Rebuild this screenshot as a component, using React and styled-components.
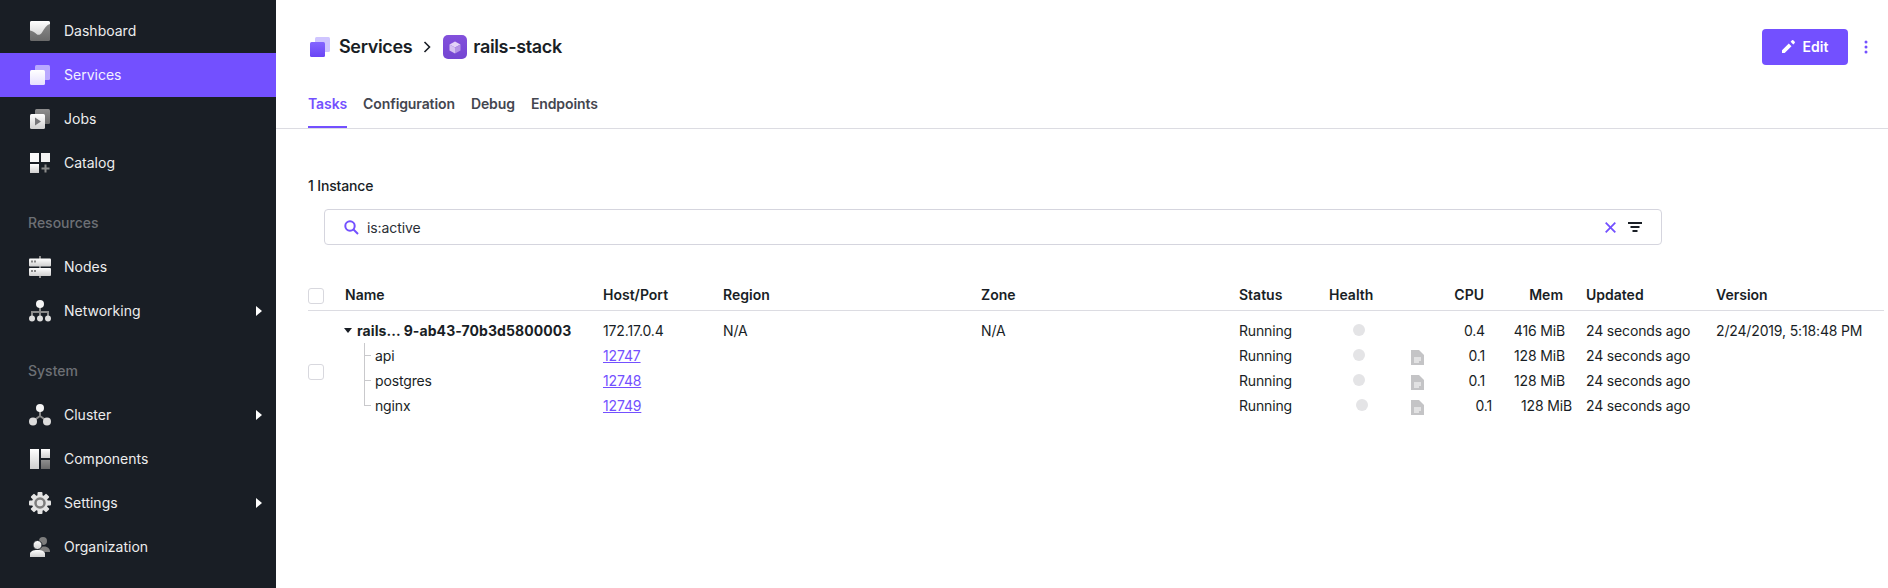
import React from "react";
import styled, { createGlobalStyle } from "styled-components";

const GlobalStyle = createGlobalStyle`
  html, body {
    margin: 0;
    padding: 0;
    height: 100%;
    background: #fff;
    overflow: hidden;
  }
  #root {
    height: 100%;
  }
  * {
    box-sizing: border-box;
  }
  body {
    font-family: Inter, "Liberation Sans", sans-serif;
    font-size: 14px;
    color: #191e25;
  }
`;

const Page = styled.div`
  display: grid;
  grid-template-columns: 276px 1fr;
  height: 588px;
`;

/* sidebar */
const Sidebar = styled.nav`
  background: #191e25;
  padding-top: 9px;
`;

const NavItem = styled.div`
  display: flex;
  align-items: center;
  height: 44px;
  padding: 0 14px 0 29px;
  color: #fff;
  background: ${(p) => (p.$active ? "#7350ff" : "transparent")};
  font-size: 14px;
  line-height: 17px;
  svg.nav-icon {
    width: 22px;
    height: 22px;
    margin-right: 13px;
    flex: none;
  }
`;

const NavLabel = styled.span`
  flex: 1;
  padding-bottom: 2px;
  opacity: 0.92;
`;

const NavCaret = styled.span`
  width: 0;
  height: 0;
  border-top: 5px solid transparent;
  border-bottom: 5px solid transparent;
  border-left: 6px solid #fff;
`;

const NavHeading = styled.div`
  display: flex;
  align-items: center;
  height: 44px;
  margin-top: 16px;
  padding: 0 0 1px 28px;
  color: #6d7075;
  font-size: 14px;
  font-weight: 500;
`;

/* header */
const Main = styled.main`
  min-width: 0;
`;

const TopBar = styled.header`
  display: flex;
  align-items: center;
  justify-content: space-between;
  height: 76px;
  padding: 17px 20px 0 33px;
`;

const Crumbs = styled.div`
  display: flex;
  align-items: center;
  font-size: 18px;
  line-height: 24px;
  font-weight: 600;
  letter-spacing: -0.35px;
`;

const CrumbSep = styled.svg`
  width: 8px;
  height: 12px;
  margin: 0 12px 0 11px;
`;

const Actions = styled.div`
  display: flex;
  align-items: center;
  gap: 16px;
`;

const EditButton = styled.button`
  display: flex;
  align-items: center;
  justify-content: center;
  gap: 8px;
  width: 86px;
  height: 36px;
  border: 0;
  border-radius: 4px;
  background: #7350ff;
  color: #fff;
  font-family: inherit;
  font-size: 14px;
  font-weight: 600;
`;

const Tabs = styled.div`
  display: flex;
  gap: 16px;
  height: 53px;
  padding-left: 32px;
  border-bottom: 1px solid #dcdce2;
`;

const Tab = styled.div`
  height: 52px;
  padding-top: 19px;
  line-height: 17px;
  font-weight: 600;
  letter-spacing: -0.1px;
  color: ${(p) => (p.$active ? "#7350ff" : "#44464f")};
  border-bottom: 2px solid ${(p) => (p.$active ? "#7350ff" : "transparent")};
`;

/* content */
const Content = styled.section`
  padding: 48px 4px 0 32px;
`;

const InstanceCount = styled.div`
  line-height: 17px;
  font-weight: 500;
  letter-spacing: -0.15px;
`;

const SearchBox = styled.div`
  display: flex;
  align-items: center;
  width: 1338px;
  height: 36px;
  margin: 15px 0 0 16px;
  padding: 0 19px 0 19px;
  border: 1px solid #d5d5de;
  border-radius: 4px;
`;

const SearchText = styled.span`
  flex: 1;
  margin-left: 8px;
  color: #2b2f36;
  letter-spacing: -0.1px;
`;

const HeadRow = styled.div`
  display: grid;
  grid-template-columns: 37px 258px 120px 258px 258px 90px 71px 30px 62px 80px 144px 1fr;
  align-items: center;
  height: 33px;
  margin-top: 33px;
  border-bottom: 1px solid #dcdce2;
  font-size: 14px;
  font-weight: 600;
`;

const CheckBox = styled.span`
  display: block;
  width: 16px;
  height: 16px;
  margin-top: ${(p) => (p.$head ? "4px" : "0")};
  border: 1px solid #d8d8de;
  border-radius: 3px;
  background: #fff;
`;

const TableBody = styled.div`
  display: grid;
  grid-template-columns: 37px 1fr;
  padding-top: 7px;
`;

const BodyCheck = styled.div`
  display: flex;
  align-items: center;
  padding-top: 8px;
`;

const Row = styled.div`
  display: grid;
  grid-template-columns: 258px 120px 258px 258px 90px 71px 30px 62px 80px 144px 1fr;
  align-items: center;
  height: 25px;
  line-height: 17px;
  letter-spacing: -0.15px;
`;

const Cell = styled.div`
  white-space: nowrap;
`;

const NumCell = styled.div`
  text-align: right;
  white-space: nowrap;
  padding-right: ${(p) => p.$pad}px;
`;

const UpdatedCell = styled.div`
  padding-left: 14px;
  white-space: nowrap;
`;

const TaskName = styled.div`
  display: flex;
  align-items: center;
  font-weight: 700;
  letter-spacing: 0.08px;
  white-space: nowrap;
`;

const TaskCaret = styled.span`
  width: 0;
  height: 0;
  margin: 0 5px 0 -1px;
  border-left: 4px solid transparent;
  border-right: 4px solid transparent;
  border-top: 5px solid #191e25;
`;

const ChildName = styled.div`
  position: relative;
  height: 25px;
  line-height: 25px;
  padding-left: 30px;
  &::before {
    content: "";
    position: absolute;
    left: 19px;
    top: 0;
    width: 1px;
    height: ${(p) => (p.$last ? "13px" : "25px")};
    background: #c9c9cc;
  }
  &::after {
    content: "";
    position: absolute;
    left: 20px;
    top: 12px;
    width: 6px;
    height: 1px;
    background: #c9c9cc;
  }
`;

const PortLink = styled.a`
  color: #7350ff;
  text-decoration: underline;
`;

const HealthDot = styled.span`
  display: block;
  width: 12px;
  height: 12px;
  margin: -2px 0 0 ${(p) => p.$indent}px;
  border-radius: 50%;
  background: #e4e4e6;
`;

const LogIcon = styled.svg`
  display: block;
  width: 13px;
  height: 15px;
  margin: 4px 0 0 11px;
`;

/* drawings */
const Gradients = () => (
  <svg width="0" height="0" style={{ position: "absolute" }}>
    <defs>
      <linearGradient id="lite" x1="0" y1="0" x2="0" y2="1">
        <stop offset="0" stopColor="#ffffff" />
        <stop offset="1" stopColor="#cfcfcf" />
      </linearGradient>
      <linearGradient id="dim" x1="0" y1="0" x2="0" y2="1">
        <stop offset="0" stopColor="#8e8e8e" />
        <stop offset="1" stopColor="#6a6a6a" />
      </linearGradient>
      <linearGradient id="svcFront" x1="0" y1="0" x2="0" y2="1">
        <stop offset="0" stopColor="#ffffff" />
        <stop offset="1" stopColor="#e6e0ff" />
      </linearGradient>
      <linearGradient id="crumbFront" x1="0" y1="0" x2="0" y2="1">
        <stop offset="0" stopColor="#8465ff" />
        <stop offset="1" stopColor="#6a45f5" />
      </linearGradient>
      <linearGradient id="stackBg" x1="0" y1="0" x2="0" y2="1">
        <stop offset="0" stopColor="#8350dc" />
        <stop offset="1" stopColor="#7445d2" />
      </linearGradient>
      <linearGradient id="wave" x1="0" y1="0" x2="0" y2="1">
        <stop offset="0" stopColor="#ffffff" />
        <stop offset="1" stopColor="#d8d8d8" />
      </linearGradient>
    </defs>
  </svg>
);

const IconDashboard = () => (
  <svg className="nav-icon" viewBox="0 0 22 22">
    <rect x="1" y="1" width="20" height="20" rx="1.5" fill="url(#dim)" />
    <path d="M2.5 1H19.5A1.5 1.5 0 0 1 21 2.5V4C17.5 5 15.5 8 13 12.500C11.500 15 9 15.500 7.500 14C5.500 12 3.500 11 1 10.500V2.500A1.500 1.500 0 0 1 2.500 1Z" fill="url(#wave)" />
  </svg>
);

const IconServices = () => (
  <svg className="nav-icon" viewBox="0 0 22 22">
    <rect x="6" y="1" width="15" height="15" rx="1.5" fill="#fff" opacity="0.5" />
    <rect x="1" y="6" width="15" height="15" rx="1.5" fill="url(#svcFront)" />
  </svg>
);

const IconJobs = () => (
  <svg className="nav-icon" viewBox="0 0 22 22">
    <rect x="6" y="1" width="15" height="15" rx="1.5" fill="url(#dim)" />
    <rect x="1" y="6" width="15" height="15" rx="1.5" fill="url(#lite)" />
    <path d="M6 9.5L12 13.5L6 17.5Z" fill="#77777a" />
  </svg>
);

const IconCatalog = () => (
  <svg className="nav-icon" viewBox="0 0 22 22">
    <rect x="1" y="1" width="9" height="9" fill="#fafafa" />
    <rect x="12" y="1" width="9" height="9" fill="#f2f2f2" />
    <rect x="1" y="12" width="9" height="9" fill="url(#lite)" />
    <path d="M15.5 12.5h2v3h3v2h-3v3h-2v-3h-3v-2h3z" fill="#8a8a8a" />
  </svg>
);

const IconNodes = () => (
  <svg className="nav-icon" viewBox="0 0 22 22">
    <rect x="10" y="0" width="2" height="22" fill="#8a8a8a" />
    <rect x="0" y="2.500" width="22" height="8" rx="1" fill="url(#lite)" />
    <rect x="0" y="12" width="22" height="8" rx="1" fill="url(#lite)" />
    <rect x="2" y="4.500" width="2" height="2" fill="#888" />
    <rect x="5" y="4.500" width="2" height="2" fill="#888" />
    <rect x="2" y="14" width="2" height="2" fill="#888" />
    <rect x="5" y="14" width="2" height="2" fill="#888" />
  </svg>
);

const IconNetworking = () => (
  <svg className="nav-icon" viewBox="0 0 22 22">
    <path d="M11 6V17M3 17V12H19V17" stroke="#8a8a8a" strokeWidth="2" fill="none" />
    <circle cx="11" cy="4" r="4" fill="#f5f5f5" />
    <circle cx="3" cy="18.500" r="3" fill="#dcdcdc" />
    <circle cx="11" cy="18.500" r="3" fill="#dcdcdc" />
    <circle cx="19" cy="18.500" r="3" fill="#dcdcdc" />
  </svg>
);

const IconCluster = () => (
  <svg className="nav-icon" viewBox="0 0 22 22">
    <path d="M11 7V12L4 17M11 12L18 17" stroke="#8a8a8a" strokeWidth="2" fill="none" />
    <circle cx="11" cy="4" r="4" fill="#f5f5f5" />
    <circle cx="4" cy="17.500" r="4" fill="#dcdcdc" />
    <circle cx="18" cy="17.500" r="4" fill="#dcdcdc" />
  </svg>
);

const IconComponents = () => (
  <svg className="nav-icon" viewBox="0 0 22 22">
    <rect x="1" y="1" width="9" height="20" fill="url(#lite)" />
    <rect x="12" y="1" width="9" height="9" fill="url(#lite)" />
    <rect x="12" y="12" width="9" height="9" fill="url(#dim)" />
  </svg>
);

const IconSettings = () => (
  <svg className="nav-icon" viewBox="0 0 22 22">
    <g fill="#e4e4e4">
      {[0, 45, 90, 135, 180, 225, 270, 315].map((deg) => (
        <rect key={deg} x="8.500" y="0" width="5" height="5" rx="1" transform={`rotate(${deg} 11 11)`} />
      ))}
    </g>
    <circle cx="11" cy="11" r="8" fill="#e4e4e4" />
    <circle cx="11" cy="11" r="4.500" fill="none" stroke="#7d7d7d" strokeWidth="2.500" />
  </svg>
);

const IconOrganization = () => (
  <svg className="nav-icon" viewBox="0 0 22 22">
    <circle cx="14" cy="5" r="4" fill="#7d7d7d" />
    <path d="M9 16C9 12 12 10.500 15 10.500C18 10.500 21 12 21 16Z" fill="#7d7d7d" />
    <circle cx="8.500" cy="9" r="4.500" fill="url(#lite)" stroke="#191e25" strokeWidth="1" />
    <path d="M1 21V18C1 15.500 4 14 8.500 14C13 14 16 15.500 16 18V21Z" fill="url(#lite)" />
  </svg>
);

const IconCrumbServices = () => (
  <svg width="22" height="22" viewBox="0 0 22 22" style={{ marginRight: 8 }}>
    <rect x="6" y="1" width="15" height="15" rx="1.500" fill="#cfc5ff" />
    <rect x="1" y="6" width="15" height="15" rx="1.500" fill="url(#crumbFront)" />
  </svg>
);

const IconStack = () => (
  <svg width="24" height="24" viewBox="0 0 24 24" style={{ marginRight: 6 }}>
    <rect width="24" height="24" rx="5" fill="url(#stackBg)" />
    <path d="M12 6.500L17.500 9.500L12 12.500L6.500 9.500Z" fill="#e3d3f7" />
    <path d="M6.500 9.500L12 12.500V18.500L6.500 15.500Z" fill="#d6c1f2" />
    <path d="M17.500 9.500L12 12.500V18.500L17.500 15.500Z" fill="#b595e6" />
  </svg>
);

const IconPencil = () => (
  <svg width="13" height="13" viewBox="0 0 13 13">
    <path d="M0 10.300V13H2.700L9.500 6.200L6.800 3.500ZM11.300 4.400L8.600 1.700L10 .3A1 1 0 0 1 11.300 .3L12.700 1.700A1 1 0 0 1 12.700 3Z" fill="#fff" />
  </svg>
);

const IconKebab = () => (
  <svg width="4" height="14" viewBox="0 0 4 14">
    <circle cx="2" cy="2" r="1.500" fill="#7350ff" />
    <circle cx="2" cy="7" r="1.500" fill="#7350ff" />
    <circle cx="2" cy="12" r="1.500" fill="#7350ff" />
  </svg>
);

const IconSearch = () => (
  <svg width="15" height="15" viewBox="0 0 15 15">
    <circle cx="6" cy="6" r="4.700" fill="none" stroke="#7350ff" strokeWidth="2" />
    <path d="M9.500 9.500L14 14" stroke="#7350ff" strokeWidth="2" />
  </svg>
);

const IconClear = () => (
  <svg width="11" height="11" viewBox="0 0 11 11" style={{ marginRight: 12 }}>
    <path d="M.7 .7L10.300 10.300M10.300 .7L.7 10.300" stroke="#7350ff" strokeWidth="1.800" />
  </svg>
);

const IconFilter = () => (
  <svg width="14" height="10" viewBox="0 0 14 10">
    <path d="M0 0H14V2H0ZM2.500 4H11.500V6H2.500ZM4.500 8H9.500V10H4.500Z" fill="#191e25" />
  </svg>
);

const LogFile = () => (
  <LogIcon viewBox="0 0 13 15">
    <path d="M0 0H8L13 5V15H0Z" fill="#c4c4c6" />
    <path d="M3 8H10M3 10H10M3 12H8" stroke="#fff" strokeWidth="1" />
  </LogIcon>
);

const navTop = [
  { label: "Dashboard", Icon: IconDashboard },
  { label: "Services", Icon: IconServices, active: true },
  { label: "Jobs", Icon: IconJobs },
  { label: "Catalog", Icon: IconCatalog },
];
const navResources = [
  { label: "Nodes", Icon: IconNodes },
  { label: "Networking", Icon: IconNetworking, caret: true },
];
const navSystem = [
  { label: "Cluster", Icon: IconCluster, caret: true },
  { label: "Components", Icon: IconComponents },
  { label: "Settings", Icon: IconSettings, caret: true },
  { label: "Organization", Icon: IconOrganization },
];

const containers = [
  { name: "api", port: "12747", cpu: "0.1", mem: "128 MiB" },
  { name: "postgres", port: "12748", cpu: "0.1", mem: "128 MiB" },
  { name: "nginx", port: "12749", cpu: "0.1", mem: "128 MiB", last: true },
];

function NavList({ items }) {
  return items.map(({ label, Icon, active, caret }) => (
    <NavItem key={label} $active={active}>
      <Icon />
      <NavLabel>{label}</NavLabel>
      {caret && <NavCaret />}
    </NavItem>
  ));
}

export default function App() {
  return (
    <Page>
      <GlobalStyle />
      <Gradients />
      <Sidebar>
        <NavList items={navTop} />
        <NavHeading>Resources</NavHeading>
        <NavList items={navResources} />
        <NavHeading>System</NavHeading>
        <NavList items={navSystem} />
      </Sidebar>
      <Main>
        <TopBar>
          <Crumbs>
            <IconCrumbServices />
            Services
            <CrumbSep viewBox="0 0 8 12">
              <path d="M1.500 1L6.500 6L1.500 11" stroke="#191e25" strokeWidth="1.600" fill="none" />
            </CrumbSep>
            <IconStack />
            rails-stack
          </Crumbs>
          <Actions>
            <EditButton>
              <IconPencil />
              Edit
            </EditButton>
            <IconKebab />
          </Actions>
        </TopBar>
        <Tabs>
          <Tab $active>Tasks</Tab>
          <Tab>Configuration</Tab>
          <Tab>Debug</Tab>
          <Tab>Endpoints</Tab>
        </Tabs>
        <Content>
          <InstanceCount>1 Instance</InstanceCount>
          <SearchBox>
            <IconSearch />
            <SearchText>is:active</SearchText>
            <IconClear />
            <IconFilter />
          </SearchBox>
          <HeadRow>
            <CheckBox $head />
            <Cell>Name</Cell>
            <Cell>Host/Port</Cell>
            <Cell>Region</Cell>
            <Cell>Zone</Cell>
            <Cell>Status</Cell>
            <Cell>Health</Cell>
            <Cell />
            <NumCell $pad={8}>CPU</NumCell>
            <NumCell $pad={9}>Mem</NumCell>
            <UpdatedCell>Updated</UpdatedCell>
            <Cell>Version</Cell>
          </HeadRow>
          <TableBody>
            <BodyCheck>
              <CheckBox />
            </BodyCheck>
            <div>
              <Row>
                <TaskName>
                  <TaskCaret />
                  rails... 9-ab43-70b3d5800003
                </TaskName>
                <Cell>172.17.0.4</Cell>
                <Cell>N/A</Cell>
                <Cell>N/A</Cell>
                <Cell>Running</Cell>
                <HealthDot $indent={24} />
                <Cell />
                <NumCell $pad={7}>0.4</NumCell>
                <NumCell $pad={7}>416 MiB</NumCell>
                <UpdatedCell>24 seconds ago</UpdatedCell>
                <Cell>2/24/2019, 5:18:48 PM</Cell>
              </Row>
              {containers.map((c) => (
                <Row key={c.name}>
                  <ChildName $last={c.last}>{c.name}</ChildName>
                  <Cell>
                    <PortLink href="#">{c.port}</PortLink>
                  </Cell>
                  <Cell />
                  <Cell />
                  <Cell>Running</Cell>
                  <HealthDot $indent={c.last ? 27 : 24} />
                  <LogFile />
                  <NumCell $pad={c.last ? 0 : 7}>{c.cpu}</NumCell>
                  <NumCell $pad={c.last ? 0 : 7}>{c.mem}</NumCell>
                  <UpdatedCell>24 seconds ago</UpdatedCell>
                  <Cell />
                </Row>
              ))}
            </div>
          </TableBody>
        </Content>
      </Main>
    </Page>
  );
}
